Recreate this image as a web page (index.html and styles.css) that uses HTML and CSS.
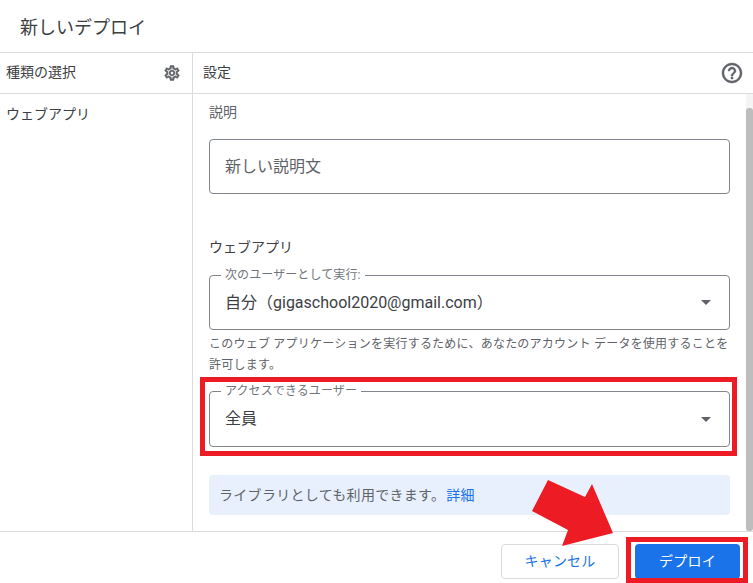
FILE: index.html
```html
<!DOCTYPE html>
<html lang="ja">
<head>
<meta charset="utf-8">
<title>新しいデプロイ</title>
<link rel="stylesheet" href="styles.css">
</head>
<body>
<div class="dialog">
  <header class="title">新しいデプロイ</header>
  <div class="main">
    <aside class="side">
      <div class="bar">
        <span class="bar-text">種類の選択</span>
        <svg class="gear" viewBox="0 0 24 24"><path d="M19.43 12.98c.04-.32.07-.64.07-.98 0-.34-.03-.66-.07-.98l2.11-1.65c.19-.15.24-.42.12-.64l-2-3.46c-.09-.16-.26-.25-.44-.25-.06 0-.12.01-.17.03l-2.49 1c-.52-.4-1.08-.73-1.69-.98l-.38-2.65C14.46 2.18 14.25 2 14 2h-4c-.25 0-.46.18-.49.42l-.38 2.65c-.61.25-1.17.59-1.69.98l-2.49-1c-.06-.02-.12-.03-.18-.03-.17 0-.34.09-.43.25l-2 3.46c-.13.22-.07.49.12.64l2.11 1.65c-.04.32-.07.65-.07.98 0 .33.03.66.07.98l-2.11 1.65c-.19.15-.24.42-.12.64l2 3.46c.09.16.26.25.44.25.06 0 .12-.01.17-.03l2.49-1c.52.4 1.08.73 1.69.98l.38 2.65c.03.24.24.42.49.42h4c.25 0 .46-.18.49-.42l.38-2.65c.61-.25 1.17-.59 1.69-.98l2.49 1c.06.02.12.03.18.03.17 0 .34-.09.43-.25l2-3.46c.12-.22.07-.49-.12-.64l-2.11-1.65zm-1.98-1.71c.04.31.05.52.05.73 0 .21-.02.43-.05.73l-.14 1.13.89.7 1.08.84-.7 1.21-1.27-.51-1.04-.42-.9.68c-.43.32-.84.56-1.25.73l-1.06.43-.16 1.13-.2 1.35h-1.4l-.19-1.35-.16-1.13-1.06-.43c-.43-.18-.83-.41-1.23-.71l-.91-.7-1.06.43-1.27.51-.7-1.21 1.08-.84.89-.7-.14-1.13c-.03-.31-.05-.54-.05-.74s.02-.43.05-.73l.14-1.13-.89-.7-1.08-.84.7-1.21 1.27.51 1.04.42.9-.68c.43-.32.84-.56 1.25-.73l1.06-.43.16-1.13.2-1.35h1.39l.19 1.35.16 1.13 1.06.43c.43.18.83.41 1.23.71l.91.7 1.06-.43 1.27-.51.7 1.21-1.07.85-.89.7.14 1.13zM12 8c-2.21 0-4 1.79-4 4s1.79 4 4 4 4-1.79 4-4-1.79-4-4-4zm0 6c-1.1 0-2-.9-2-2s.9-2 2-2 2 .9 2 2-.9 2-2 2z"/></svg>
      </div>
      <div class="type">ウェブアプリ</div>
    </aside>
    <section class="panel">
      <div class="bar bar-right">
        <span class="bar-text">設定</span>
        <svg class="help" viewBox="0 0 24 24"><path d="M11 18h2v-2h-2v2zm1-16C6.48 2 2 6.48 2 12s4.48 10 10 10 10-4.48 10-10S17.52 2 12 2zm0 18c-4.41 0-8-3.59-8-8s3.59-8 8-8 8 3.59 8 8-3.59 8-8 8zm0-14c-2.21 0-4 1.79-4 4h2c0-1.1.9-2 2-2s2 .9 2 2c0 2-3 1.75-3 5h2c0-2.25 3-2.5 3-5 0-2.21-1.79-4-4-4z"/></svg>
      </div>
      <div class="form">
        <div class="field-label">説明</div>
        <div class="input">新しい説明文</div>
        <h2 class="heading">ウェブアプリ</h2>
        <fieldset class="select">
          <legend>次のユーザーとして実行:</legend>
          <span class="value">自分（gigaschool2020@gmail.com）</span>
          <span class="caret"></span>
        </fieldset>
        <p class="hint">このウェブ アプリケーションを実行するために、あなたのアカウント データを使用することを許可します。</p>
        <fieldset class="select select-access">
          <legend>アクセスできるユーザー</legend>
          <span class="value">全員</span>
          <span class="caret"></span>
        </fieldset>
        <div class="info">ライブラリとしても利用できます。<a class="link">詳細</a></div>
      </div>
      <div class="scroll-track"><div class="scroll-thumb"></div></div>
    </section>
  </div>
  <footer class="actions">
    <button class="btn btn-cancel">キャンセル</button>
    <button class="btn btn-deploy">デプロイ</button>
  </footer>
</div>
<div class="mark mark-access"></div>
<div class="mark mark-deploy"></div>
<svg class="arrow" viewBox="0 0 753 583"><polygon points="548,480 585,497 592,484 613,533 562,546 568,530 532,511"/></svg>
</body>
</html>
```
FILE: styles.css
```css
* { box-sizing: border-box; }
html, body { margin: 0; height: 100%; }
body {
  position: relative;
  overflow: hidden;
  background: #fff;
  color: #3c4043;
  font-family: Roboto, "Noto Sans CJK JP", sans-serif;
  font-size: 14px;
}
.dialog { display: flex; flex-direction: column; height: 583px; }
.title {
  height: 53px;
  padding: 0 20px 1px;
  display: flex;
  align-items: center;
  font-size: 18px;
  border-bottom: 1px solid #dadce0;
}
.main { display: flex; height: 478px; }
.side { width: 193px; flex: none; border-right: 1px solid #dadce0; }
.panel { flex: 1; position: relative; overflow: hidden; }
.bar {
  height: 41px;
  display: flex;
  align-items: center;
  justify-content: space-between;
  border-bottom: 1px solid #dadce0;
  padding: 0 11px 0 6px;
}
.bar-text { padding-bottom: 4px; }
.bar-right { padding: 0 9px 0 10px; }
.gear { width: 18px; height: 18px; fill: #5f6368; stroke: #5f6368; stroke-width: .7; }
.help { width: 24px; height: 24px; fill: #5f6368; stroke: #5f6368; stroke-width: .4; }
.type { padding: 10px 6px; line-height: 20px; }
.form { padding: 8px 23px 0 16px; }
.field-label { line-height: 20px; color: #5f6368; }
.input {
  margin-top: 17px;
  height: 55px;
  padding: 0 15px 4px;
  display: flex;
  align-items: center;
  border: 1px solid #80868b;
  border-radius: 4px;
  font-size: 16px;
  color: #5f6368;
}
.heading {
  margin: 43px 0 0;
  font-size: 14px;
  font-weight: 400;
  line-height: 20px;
}
.select {
  position: relative;
  margin: 11px 0 0;
  padding: 0 15px;
  height: 62px;
  border: 1px solid #80868b;
  border-radius: 4px;
  min-width: 0;
}
.select legend {
  margin-left: -4px;
  padding: 0 4px;
  font-size: 12px;
  line-height: 14px;
  color: #70757a;
  letter-spacing: .1px;
}
.value { display: block; font-size: 16px; line-height: 24px; margin-top: 9px; }
.caret {
  position: absolute;
  right: 18px;
  top: 18px;
  border-left: 5px solid transparent;
  border-right: 5px solid transparent;
  border-top: 5px solid #5f6368;
}
.hint {
  margin: 4px 0 0;
  font-size: 12px;
  line-height: 21px;
  color: #5f6368;
  letter-spacing: .23px;
}
.select-access { margin-top: 8px; height: 63px; }
.select-access .caret { top: 19px; }
.info {
  margin-top: 28px;
  height: 40px;
  padding: 0 10px 2px;
  display: flex;
  align-items: center;
  background: #e8f0fe;
  border-radius: 4px;
  color: #5f6368;
  letter-spacing: .3px;
}
.link { color: #1a73e8; margin-left: 1px; }
.scroll-track {
  position: absolute;
  right: 0;
  top: 41px;
  bottom: 0;
  width: 7px;
  background: #f4f4f4;
}
.scroll-thumb {
  position: absolute;
  top: 14px;
  bottom: 0;
  left: 0;
  right: 0;
  background: #bdbdbd;
  border-radius: 3px;
}
.actions {
  flex: 1;
  display: flex;
  justify-content: flex-end;
  align-items: flex-start;
  gap: 16px;
  padding: 12px 13px 0 0;
  border-top: 1px solid #dadce0;
}
.btn {
  height: 35px;
  font: inherit;
  letter-spacing: .2px;
  border-radius: 4px;
  padding: 0 0 3px;
  display: flex;
  align-items: center;
  justify-content: center;
}
.btn-cancel { width: 118px; background: #fff; color: #1a73e8; border: 1px solid #dadce0; }
.btn-deploy { width: 105px; background: #1a73e8; color: #fff; border: 0; }
.mark { position: absolute; border: 5px solid #ed1c24; }
.mark-access { left: 200px; top: 377px; width: 537px; height: 79px; }
.mark-deploy { left: 626px; top: 537px; width: 122px; height: 46px; }
.arrow { position: absolute; left: 0; top: 0; width: 753px; height: 583px; fill: #ed1c24; pointer-events: none; }
```
